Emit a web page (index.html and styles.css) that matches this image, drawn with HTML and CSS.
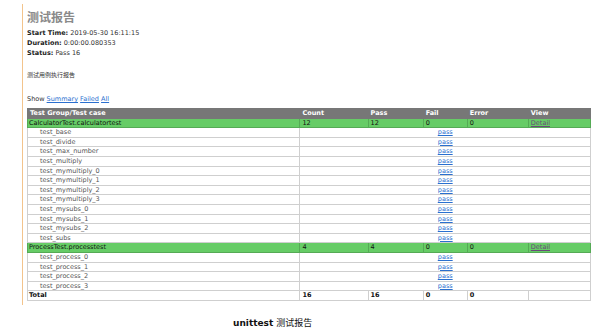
FILE: index.html
```html
<!DOCTYPE html>
<html>
<head>
<meta charset="utf-8">
<link rel="stylesheet" href="styles.css">
</head>
<body>
<div class="report">
  <h1 class="title">测试报告</h1>
  <p class="attr"><b>Start Time:</b> 2019-05-30 16:11:15</p>
  <p class="attr"><b>Duration:</b> 0:00:00.080353</p>
  <p class="attr"><b>Status:</b> Pass 16</p>
  <p class="desc">测试用例执行报告</p>
  <p class="show">Show <a href="#">Summary</a> <a href="#">Failed</a> <a href="#">All</a></p>
  <table class="results">
    <colgroup>
      <col class="c-name"><col class="c-count"><col class="c-pass"><col class="c-fail"><col class="c-error"><col class="c-view">
    </colgroup>
    <tr class="head"><td>Test Group/Test case</td><td>Count</td><td>Pass</td><td>Fail</td><td>Error</td><td>View</td></tr>
    <tr class="group"><td>CalculatorTest.calculatortest</td><td>12</td><td>12</td><td>0</td><td>0</td><td><a class="detail" href="#">Detail</a></td></tr>
    <tr class="case"><td>test_base</td><td colspan="5"><a href="#">pass</a></td></tr>
    <tr class="case"><td>test_divide</td><td colspan="5"><a href="#">pass</a></td></tr>
    <tr class="case"><td>test_max_number</td><td colspan="5"><a href="#">pass</a></td></tr>
    <tr class="case"><td>test_multiply</td><td colspan="5"><a href="#">pass</a></td></tr>
    <tr class="case"><td>test_mymultiply_0</td><td colspan="5"><a href="#">pass</a></td></tr>
    <tr class="case"><td>test_mymultiply_1</td><td colspan="5"><a href="#">pass</a></td></tr>
    <tr class="case"><td>test_mymultiply_2</td><td colspan="5"><a href="#">pass</a></td></tr>
    <tr class="case"><td>test_mymultiply_3</td><td colspan="5"><a href="#">pass</a></td></tr>
    <tr class="case"><td>test_mysubs_0</td><td colspan="5"><a href="#">pass</a></td></tr>
    <tr class="case"><td>test_mysubs_1</td><td colspan="5"><a href="#">pass</a></td></tr>
    <tr class="case"><td>test_mysubs_2</td><td colspan="5"><a href="#">pass</a></td></tr>
    <tr class="case"><td>test_subs</td><td colspan="5"><a href="#">pass</a></td></tr>
    <tr class="group"><td>ProcessTest.processtest</td><td>4</td><td>4</td><td>0</td><td>0</td><td><a class="detail" href="#">Detail</a></td></tr>
    <tr class="case"><td>test_process_0</td><td colspan="5"><a href="#">pass</a></td></tr>
    <tr class="case"><td>test_process_1</td><td colspan="5"><a href="#">pass</a></td></tr>
    <tr class="case"><td>test_process_2</td><td colspan="5"><a href="#">pass</a></td></tr>
    <tr class="case"><td>test_process_3</td><td colspan="5"><a href="#">pass</a></td></tr>
    <tr class="total"><td>Total</td><td>16</td><td>16</td><td>0</td><td>0</td><td></td></tr>
  </table>
</div>
<p class="caption"><b>unittest</b> 测试报告</p>
</body>
</html>
```
FILE: styles.css
```css
html, body {
  margin: 0;
  padding: 0;
  background: #fff;
}
body {
  font-family: "DejaVu Sans", Verdana, "Noto Sans CJK SC", sans-serif;
  color: #222;
  width: 616px;
  height: 330px;
  overflow: hidden;
}
.report {
  margin: 4px 0 0 22px;
  border-left: 1px solid #f3c48c;
  padding: 5px 0 4px 4px;
  width: 564px;
}
.title {
  margin: 0;
  font-family: "Noto Sans CJK SC", sans-serif;
  font-size: 12px;
  line-height: 16px;
  font-weight: bold;
  color: #8a8a8a;
}
.attr {
  margin: 0;
  font-size: 6.5px;
  line-height: 10px;
  color: #333;
}
.attr:first-of-type {
  margin-top: 3px;
}
.attr b {
  color: #222;
}
.desc {
  margin: 12px 0 0;
  font-family: "Noto Sans CJK SC", sans-serif;
  font-size: 6px;
  line-height: 9px;
  color: #333;
}
.show {
  margin: 16px 0 0;
  font-size: 6.5px;
  line-height: 9px;
  color: #333;
}
.show a {
  color: #2a6fcf;
}
.results {
  margin-top: 4px;
  width: 564px;
  border-collapse: collapse;
  font-size: 6.5px;
  border: 1px solid #bbb;
}
.c-name { width: 272px; }
.c-count { width: 68px; }
.c-pass { width: 55px; }
.c-fail { width: 44px; }
.c-error { width: 61px; }
.c-view { width: 62px; }
.results td {
  border: 1px solid #cfcfcf;
  padding: 0 2px;
  height: 8.6px;
  line-height: 8.6px;
  white-space: nowrap;
  vertical-align: middle;
}
.head td {
  background: #777;
  color: #fff;
  font-weight: bold;
  border-color: #777;
}
.group td {
  background: #66cc66;
  color: #111;
  border-color: #55aa55;
}
.group td:first-child {
  padding-left: 1px;
}
.case td {
  color: #555;
}
.case td:first-child {
  padding-left: 12px;
}
.case td + td {
  text-align: center;
}
.case a {
  color: #2a6fcf;
}
.detail {
  color: #6a4a7a;
}
.total td {
  font-weight: bold;
  color: #111;
}
.total td:first-child {
  padding-left: 1px;
}
.caption {
  margin: 12px 0 0 233px;
  font-family: "DejaVu Sans", "Noto Sans CJK SC", sans-serif;
  font-size: 9px;
  line-height: 12px;
  color: #111;
}
.caption b {
  font-weight: 600;
}
```
